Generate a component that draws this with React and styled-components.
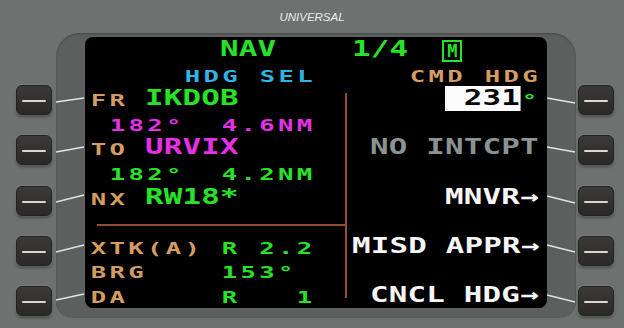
import styled, { createGlobalStyle, css } from "styled-components";

/* ------------------ CONSTANTS ------------------ */

const CELL = 18.75;
const ROW = 24.6;

const INK = {
  green: "#27e327",
  cyan: "#2db5e6",
  tan: "#d49c60",
  magenta: "#e530e5",
  white: "#f6f6f6",
  gray: "#8a9393",
  black: "#050505",
  rule: "#934f2b",
};

/* ------------------ STYLES ------------------ */

const GlobalStyle = createGlobalStyle`
  html, body {
    margin: 0;
    padding: 0;
    background: #6d716f;
  }
`;

const Page = styled.div`
  width: 624px;
  height: 328px;
  display: flex;
  flex-direction: column;
  background: #6d716f;
  overflow: hidden;
`;

const TopBar = styled.div`
  height: 33px;
  box-sizing: border-box;
  padding-top: 11px;
  display: flex;
  justify-content: center;
  font-family: "Liberation Sans", Arial, sans-serif;
  font-style: italic;
  font-size: 11.5px;
  line-height: 13px;
  color: #ededed;
`;

const Main = styled.div`
  flex: 1;
  display: flex;
`;

const KeyColumn = styled.div`
  width: ${({ $side }) => ($side === "left" ? 56 : 48)}px;
  box-sizing: border-box;
  padding: 52px 0 0 ${({ $side }) => ($side === "left" ? 16 : 2)}px;
  display: flex;
  flex-direction: column;
  gap: 20.3px;
`;

const LineKey = styled.div`
  width: 36px;
  height: 30px;
  box-sizing: border-box;
  border-radius: 6px;
  border: 1px solid #222220;
  background: linear-gradient(180deg, #3b3a38 0%, #2a2927 100%);
  box-shadow: 0 0 0 1px rgba(255, 255, 255, 0.07), 0 2px 3px rgba(0, 0, 0, 0.35);
  display: flex;
  align-items: center;
  justify-content: center;
`;

const KeyMark = styled.span`
  width: 24px;
  height: 2px;
  margin-top: 2px;
  border-radius: 1px;
  background: #d8d8d6;
`;

const Bezel = styled.div`
  width: 520px;
  height: 285px;
  box-sizing: border-box;
  padding-top: 4px;
  border-radius: 24px 24px 16px 16px;
  background: #5c5f5e;
  box-shadow: inset 0 1px 2px rgba(0, 0, 0, 0.25);
  display: flex;
  align-items: flex-start;
`;

const Connectors = styled.svg`
  flex: none;
  display: block;
`;

const Screen = styled.div`
  width: 462px;
  height: 271px;
  box-sizing: border-box;
  padding-left: 4px;
  border-radius: 8px;
  background: #000;
  display: flex;
  flex-direction: column;
  font-family: "DejaVu Sans Mono", monospace;
  font-weight: bold;
  overflow: hidden;
`;

const Row = styled.div`
  height: ${ROW}px;
  display: grid;
  grid-template-columns: repeat(${({ $cols }) => $cols}, ${CELL}px);
  grid-template-rows: ${ROW}px;
  align-items: start;
`;

const Text = styled.span`
  grid-column: ${({ $col }) => $col + 1} / span ${({ $len }) => $len};
  grid-row: 1;
  justify-self: start;
  display: inline-block;
  white-space: pre;
  color: ${({ $color }) => $color};
  background: ${({ $bg }) => $bg || "transparent"};
  transform-origin: left top;
  ${({ $small }) =>
    $small
      ? css`
          font-size: 16px;
          line-height: 30.6px;
          letter-spacing: 2.086px;
          padding-left: 1.043px;
          transform: scaleX(1.6);
        `
      : css`
          font-size: 22px;
          line-height: ${ROW}px;
          letter-spacing: 0.148px;
          transform: scaleX(1.4);
        `}
`;

const ModeBox = styled.span`
  grid-column: ${({ $col }) => $col + 1};
  grid-row: 1;
  width: 20px;
  height: 22px;
  box-sizing: border-box;
  margin: 3px 0 0 -3px;
  border: 2px solid ${INK.green};
  display: flex;
  align-items: center;
  justify-content: center;
  color: ${INK.green};
  font-size: 17px;
  line-height: 1;
`;

const Body = styled.div`
  flex: 1;
  display: flex;
`;

const LeftPane = styled.div`
  width: 256px;
  display: flex;
  flex-direction: column;
`;

const RightPane = styled.div`
  flex: 1;
  padding-left: 4.5px;
  display: flex;
  flex-direction: column;
`;

const Divider = styled.div`
  width: 2px;
  margin: 6.8px 0 10px;
  background: ${INK.rule};
`;

const RuleRow = styled.div`
  height: ${ROW}px;
  display: flex;
  flex-direction: column;
`;

const Rule = styled.div`
  height: 2px;
  margin: 15px 0 0 8px;
  background: ${INK.rule};
`;

/* ------------------ DATA ------------------ */

const LEFT_LINKS = [
  [65, 61],
  [115, 110],
  [165, 158],
  [215, 208],
  [263, 257],
];

const RIGHT_LINKS = [
  [61, 66],
  [110, 115],
  [159, 166],
  [208, 215],
  [258, 265],
];

const LEFT_ROWS = [
  [
    { col: 0, text: "FR", color: INK.tan, small: true },
    { col: 3, text: "IKDOB", color: INK.green },
  ],
  [
    { col: 1, text: "182°", color: INK.magenta, small: true },
    { col: 7, text: "4.6NM", color: INK.magenta, small: true },
  ],
  [
    { col: 0, text: "TO", color: INK.tan, small: true },
    { col: 3, text: "URVIX", color: INK.magenta },
  ],
  [
    { col: 1, text: "182°", color: INK.green, small: true },
    { col: 7, text: "4.2NM", color: INK.green, small: true },
  ],
  [
    { col: 0, text: "NX", color: INK.tan, small: true },
    { col: 3, text: "RW18*", color: INK.green },
  ],
  "rule",
  [
    { col: 0, text: "XTK(A)", color: INK.tan, small: true },
    { col: 7, text: "R 2.2", color: INK.green, small: true },
  ],
  [
    { col: 0, text: "BRG", color: INK.tan, small: true },
    { col: 7, text: "153°", color: INK.green, small: true },
  ],
  [
    { col: 0, text: "DA", color: INK.tan, small: true },
    { col: 7, text: "R   1", color: INK.green, small: true },
  ],
];

const RIGHT_ROWS = [
  [
    { col: 5, text: " 231", color: INK.black, bg: "#fbfbfb" },
    { col: 9, text: "°", color: INK.green, small: true },
  ],
  [],
  [{ col: 1, text: "NO INTCPT", color: INK.gray }],
  [],
  [{ col: 5, text: "MNVR→", color: INK.white }],
  [],
  [{ col: 0, text: "MISD APPR→", color: INK.white }],
  [],
  [{ col: 1, text: "CNCL HDG→", color: INK.white }],
];

/* ------------------ COMPONENTS ------------------ */

function Seg({ col, text, color, small, bg }) {
  return (
    <Text $col={col} $len={text.length} $color={color} $small={small} $bg={bg}>
      {text}
    </Text>
  );
}

function KeyStack({ side }) {
  return (
    <KeyColumn $side={side}>
      {[0, 1, 2, 3, 4].map((i) => (
        <LineKey key={i}>
          <KeyMark />
        </LineKey>
      ))}
    </KeyColumn>
  );
}

function Links({ links, width, side }) {
  return (
    <Connectors width={width} height="271" viewBox={`0 0 ${width} 271`}>
      {links.map(([a, b], i) => (
        <line
          key={i}
          x1={side === "left" ? 0 : 0}
          y1={a}
          x2={width - 1}
          y2={b}
          stroke="#e4e4e2"
          strokeWidth="1.6"
        />
      ))}
    </Connectors>
  );
}

export default function App() {
  return (
    <>
      <GlobalStyle />
      <Page>
        <TopBar>UNIVERSAL</TopBar>
        <Main>
          <KeyStack side="left" />
          <Bezel>
            <Links links={LEFT_LINKS} width={29} side="left" />
            <Screen>
              <Row $cols={24}>
                <Seg col={7} text="NAV" color={INK.green} />
                <Seg col={14} text="1/4" color={INK.green} />
                <ModeBox $col={19}>M</ModeBox>
              </Row>
              <Row $cols={24}>
                <Seg col={5} text="HDG SEL" color={INK.cyan} small />
                <Seg col={17} text="CMD HDG" color={INK.tan} small />
              </Row>
              <Body>
                <LeftPane>
                  {LEFT_ROWS.map((row, i) =>
                    row === "rule" ? (
                      <RuleRow key={i}>
                        <Rule />
                      </RuleRow>
                    ) : (
                      <Row key={i} $cols={13}>
                        {row.map((s) => (
                          <Seg key={s.col} {...s} />
                        ))}
                      </Row>
                    )
                  )}
                </LeftPane>
                <Divider />
                <RightPane>
                  {RIGHT_ROWS.map((row, i) => (
                    <Row key={i} $cols={10}>
                      {row.map((s) => (
                        <Seg key={s.col} {...s} />
                      ))}
                    </Row>
                  ))}
                </RightPane>
              </Body>
            </Screen>
            <Links links={RIGHT_LINKS} width={29} side="right" />
          </Bezel>
          <KeyStack side="right" />
        </Main>
      </Page>
    </>
  );
}
